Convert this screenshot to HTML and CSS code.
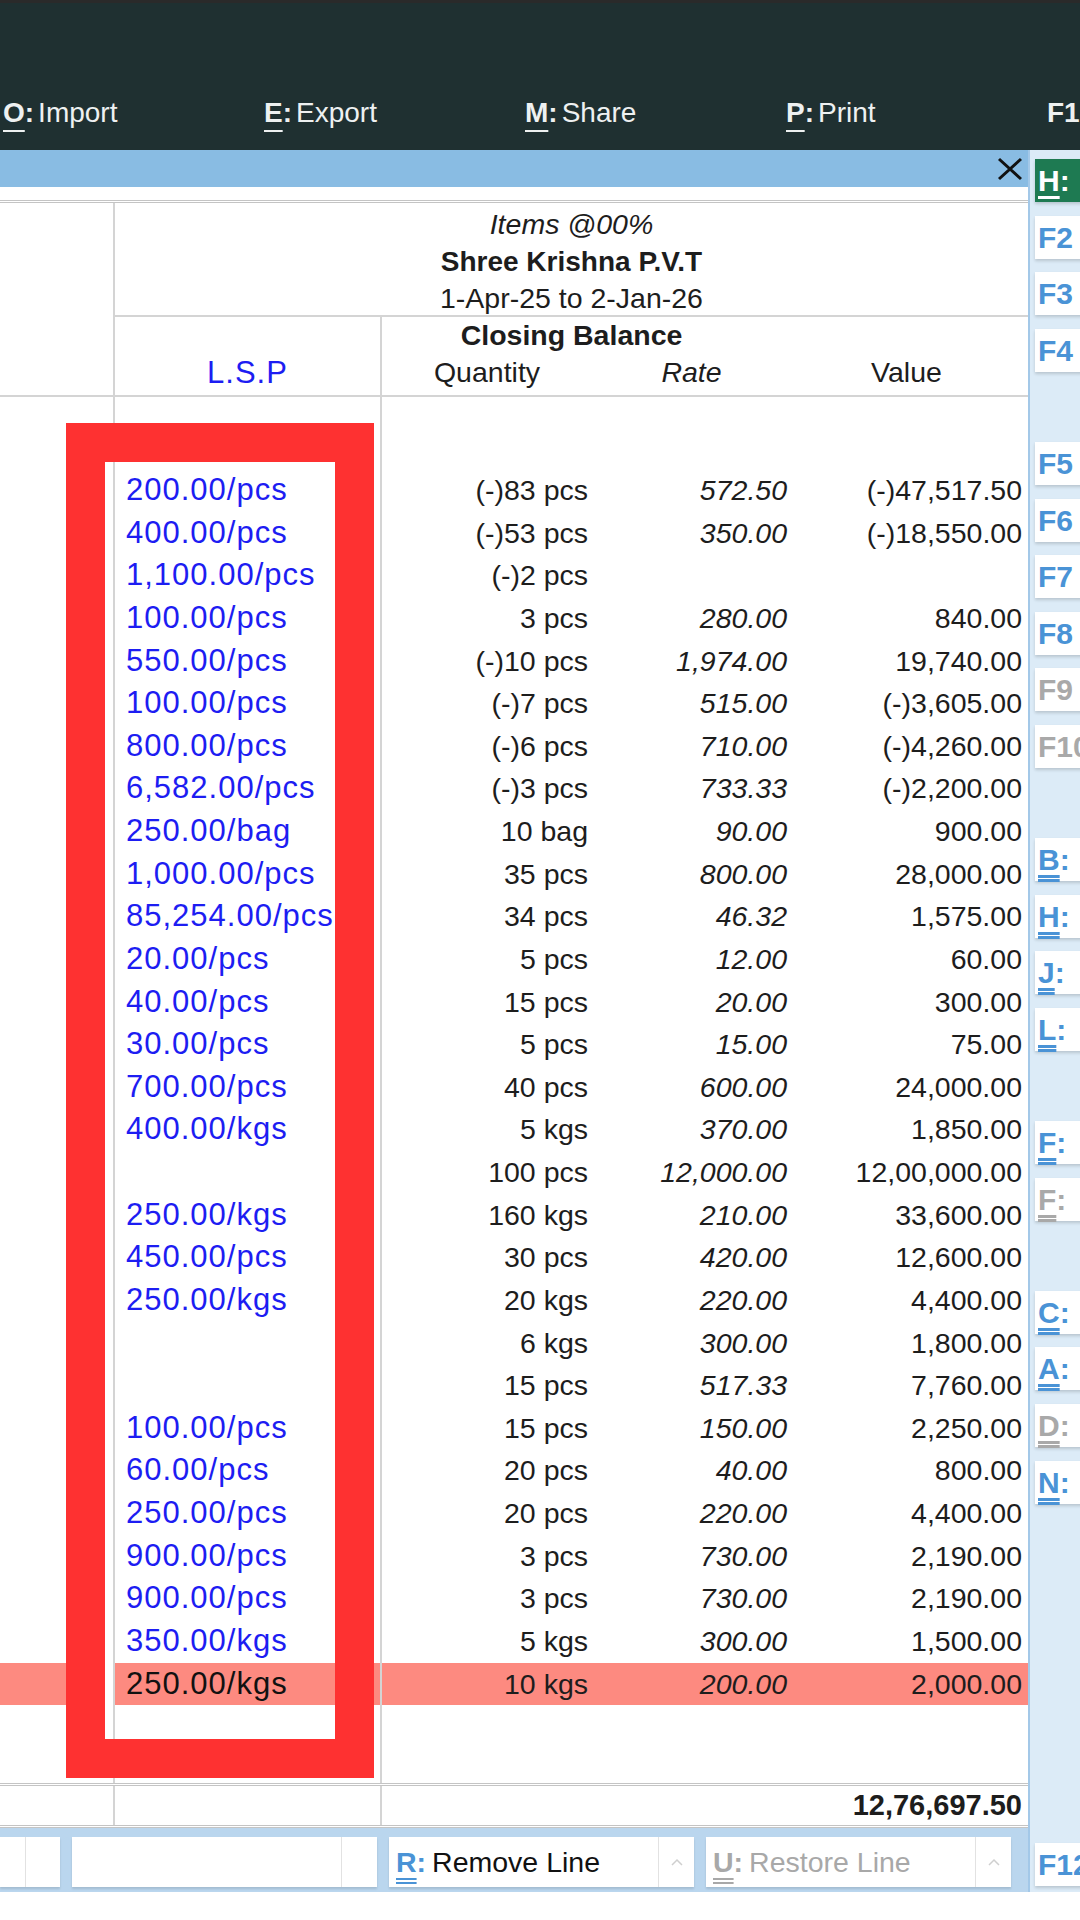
FILE: index.html
```html
<!DOCTYPE html>
<html lang="en">
<head>
    <meta charset="UTF-8">
    <title>Stock Summary - Closing Balance</title>
    <link rel="stylesheet" href="styles.css">
</head>
<body>

    <!-- Top menu -->
    <header class="topbar">
        <div class="menu-item"><b><u>O</u>:</b>Import</div>
        <div class="menu-item"><b><u>E</u>:</b>Export</div>
        <div class="menu-item"><b><u>M</u>:</b>Share</div>
        <div class="menu-item"><b><u>P</u>:</b>Print</div>
        <div class="menu-item"><b>F1</b></div>
    </header>

    <div class="workspace">
        <div class="main">
            <div class="titlebar">
                <svg class="close" width="26" height="24" viewBox="0 0 26 24">
                    <path d="M2 2 L24 22 M24 2 L2 22" stroke="#111" stroke-width="3" fill="none"/>
                </svg>
            </div>

            <div class="report">
                <!-- Report title -->
                <div class="title-block">
                    <div class="cell-name"></div>
                    <div class="title-text">
                        <div class="t-italic">Items @00%</div>
                        <div class="t-bold">Shree Krishna P.V.T</div>
                        <div>1-Apr-25 to 2-Jan-26</div>
                    </div>
                </div>

                <!-- Column headings -->
                <div class="colhead">
                    <div class="ch-name"></div>
                    <div class="ch-lsp"><span class="lsp">L.S.P</span></div>
                    <div class="ch-closing">Closing Balance</div>
                    <div class="ch-qty">Quantity</div>
                    <div class="ch-rate">Rate</div>
                    <div class="ch-value">Value</div>
                </div>

                <div class="row spacer-top"><div class="c-name"></div><div class="c-lsp"></div><div></div><div></div><div></div></div>

                <div class="row"><div class="c-name"></div><div class="c-lsp lsp">200.00/pcs</div><div class="c-qty">(-)83 pcs</div><div class="c-rate">572.50</div><div class="c-value">(-)47,517.50</div></div>
                <div class="row"><div class="c-name"></div><div class="c-lsp lsp">400.00/pcs</div><div class="c-qty">(-)53 pcs</div><div class="c-rate">350.00</div><div class="c-value">(-)18,550.00</div></div>
                <div class="row"><div class="c-name"></div><div class="c-lsp lsp">1,100.00/pcs</div><div class="c-qty">(-)2 pcs</div><div class="c-rate"></div><div class="c-value"></div></div>
                <div class="row"><div class="c-name"></div><div class="c-lsp lsp">100.00/pcs</div><div class="c-qty">3 pcs</div><div class="c-rate">280.00</div><div class="c-value">840.00</div></div>
                <div class="row"><div class="c-name"></div><div class="c-lsp lsp">550.00/pcs</div><div class="c-qty">(-)10 pcs</div><div class="c-rate">1,974.00</div><div class="c-value">19,740.00</div></div>
                <div class="row"><div class="c-name"></div><div class="c-lsp lsp">100.00/pcs</div><div class="c-qty">(-)7 pcs</div><div class="c-rate">515.00</div><div class="c-value">(-)3,605.00</div></div>
                <div class="row"><div class="c-name"></div><div class="c-lsp lsp">800.00/pcs</div><div class="c-qty">(-)6 pcs</div><div class="c-rate">710.00</div><div class="c-value">(-)4,260.00</div></div>
                <div class="row"><div class="c-name"></div><div class="c-lsp lsp">6,582.00/pcs</div><div class="c-qty">(-)3 pcs</div><div class="c-rate">733.33</div><div class="c-value">(-)2,200.00</div></div>
                <div class="row"><div class="c-name"></div><div class="c-lsp lsp">250.00/bag</div><div class="c-qty">10 bag</div><div class="c-rate">90.00</div><div class="c-value">900.00</div></div>
                <div class="row"><div class="c-name"></div><div class="c-lsp lsp">1,000.00/pcs</div><div class="c-qty">35 pcs</div><div class="c-rate">800.00</div><div class="c-value">28,000.00</div></div>
                <div class="row"><div class="c-name"></div><div class="c-lsp lsp">85,254.00/pcs</div><div class="c-qty">34 pcs</div><div class="c-rate">46.32</div><div class="c-value">1,575.00</div></div>
                <div class="row"><div class="c-name"></div><div class="c-lsp lsp">20.00/pcs</div><div class="c-qty">5 pcs</div><div class="c-rate">12.00</div><div class="c-value">60.00</div></div>
                <div class="row"><div class="c-name"></div><div class="c-lsp lsp">40.00/pcs</div><div class="c-qty">15 pcs</div><div class="c-rate">20.00</div><div class="c-value">300.00</div></div>
                <div class="row"><div class="c-name"></div><div class="c-lsp lsp">30.00/pcs</div><div class="c-qty">5 pcs</div><div class="c-rate">15.00</div><div class="c-value">75.00</div></div>
                <div class="row"><div class="c-name"></div><div class="c-lsp lsp">700.00/pcs</div><div class="c-qty">40 pcs</div><div class="c-rate">600.00</div><div class="c-value">24,000.00</div></div>
                <div class="row"><div class="c-name"></div><div class="c-lsp lsp">400.00/kgs</div><div class="c-qty">5 kgs</div><div class="c-rate">370.00</div><div class="c-value">1,850.00</div></div>
                <div class="row"><div class="c-name"></div><div class="c-lsp lsp"></div><div class="c-qty">100 pcs</div><div class="c-rate">12,000.00</div><div class="c-value">12,00,000.00</div></div>
                <div class="row"><div class="c-name"></div><div class="c-lsp lsp">250.00/kgs</div><div class="c-qty">160 kgs</div><div class="c-rate">210.00</div><div class="c-value">33,600.00</div></div>
                <div class="row"><div class="c-name"></div><div class="c-lsp lsp">450.00/pcs</div><div class="c-qty">30 pcs</div><div class="c-rate">420.00</div><div class="c-value">12,600.00</div></div>
                <div class="row"><div class="c-name"></div><div class="c-lsp lsp">250.00/kgs</div><div class="c-qty">20 kgs</div><div class="c-rate">220.00</div><div class="c-value">4,400.00</div></div>
                <div class="row"><div class="c-name"></div><div class="c-lsp lsp"></div><div class="c-qty">6 kgs</div><div class="c-rate">300.00</div><div class="c-value">1,800.00</div></div>
                <div class="row"><div class="c-name"></div><div class="c-lsp lsp"></div><div class="c-qty">15 pcs</div><div class="c-rate">517.33</div><div class="c-value">7,760.00</div></div>
                <div class="row"><div class="c-name"></div><div class="c-lsp lsp">100.00/pcs</div><div class="c-qty">15 pcs</div><div class="c-rate">150.00</div><div class="c-value">2,250.00</div></div>
                <div class="row"><div class="c-name"></div><div class="c-lsp lsp">60.00/pcs</div><div class="c-qty">20 pcs</div><div class="c-rate">40.00</div><div class="c-value">800.00</div></div>
                <div class="row"><div class="c-name"></div><div class="c-lsp lsp">250.00/pcs</div><div class="c-qty">20 pcs</div><div class="c-rate">220.00</div><div class="c-value">4,400.00</div></div>
                <div class="row"><div class="c-name"></div><div class="c-lsp lsp">900.00/pcs</div><div class="c-qty">3 pcs</div><div class="c-rate">730.00</div><div class="c-value">2,190.00</div></div>
                <div class="row"><div class="c-name"></div><div class="c-lsp lsp">900.00/pcs</div><div class="c-qty">3 pcs</div><div class="c-rate">730.00</div><div class="c-value">2,190.00</div></div>
                <div class="row"><div class="c-name"></div><div class="c-lsp lsp">350.00/kgs</div><div class="c-qty">5 kgs</div><div class="c-rate">300.00</div><div class="c-value">1,500.00</div></div>
                <div class="row selected"><div class="c-name"></div><div class="c-lsp lsp">250.00/kgs</div><div class="c-qty">10 kgs</div><div class="c-rate">200.00</div><div class="c-value">2,000.00</div></div>

                <div class="row spacer-bottom"><div class="c-name"></div><div class="c-lsp"></div><div></div><div></div><div></div></div>

                <!-- Grand total -->
                <div class="row total"><div class="c-name"></div><div class="c-lsp"></div><div></div><div></div><div class="c-value">12,76,697.50</div></div>
            </div>

            <!-- Bottom button bar -->
            <div class="actionbar">
                <div class="abtn-group">
                    <div class="abtn" style="width:26px"></div>
                    <div class="abtn" style="width:34px"></div>
                </div>
                <div class="abtn-group">
                    <div class="abtn wide"></div>
                    <div class="abtn arrow"></div>
                </div>
                <div class="abtn-group">
                    <div class="abtn wide"><span class="akey"><u>R</u>:</span>Remove Line</div>
                    <div class="abtn arrow"><svg width="12" height="8" viewBox="0 0 12 8"><polyline points="1,7 6,2 11,7" fill="none" stroke="#cfcfcf" stroke-width="1.5"/></svg></div>
                </div>
                <div class="abtn-group">
                    <div class="abtn wide disabled"><span class="akey"><u>U</u>:</span>Restore Line</div>
                    <div class="abtn arrow"><svg width="12" height="8" viewBox="0 0 12 8"><polyline points="1,7 6,2 11,7" fill="none" stroke="#cfcfcf" stroke-width="1.5"/></svg></div>
                </div>
            </div>
        </div>

        <!-- Right side buttons (only the keys fit in view) -->
        <aside class="sidebar">
            <div class="sk active"><u class="single">H</u>:</div>
            <div class="sk">F2</div>
            <div class="sk">F3</div>
            <div class="sk">F4</div>
            <div class="sk-blank"></div>
            <div class="sk">F5</div>
            <div class="sk">F6</div>
            <div class="sk">F7</div>
            <div class="sk">F8</div>
            <div class="sk off">F9</div>
            <div class="sk off">F10</div>
            <div class="sk-blank"></div>
            <div class="sk"><u>B</u>:</div>
            <div class="sk"><u>H</u>:</div>
            <div class="sk"><u>J</u>:</div>
            <div class="sk"><u>L</u>:</div>
            <div class="sk-blank"></div>
            <div class="sk"><u>F</u>:</div>
            <div class="sk off"><u>F</u>:</div>
            <div class="sk-blank"></div>
            <div class="sk"><u>C</u>:</div>
            <div class="sk"><u>A</u>:</div>
            <div class="sk off"><u>D</u>:</div>
            <div class="sk"><u>N</u>:</div>
            <div class="sk bottom">F12</div>
        </aside>
    </div>

    <!-- Red highlight drawn over the L.S.P column -->
    <div class="annotation"></div>

</body>
</html>
```

FILE: styles.css
```css
/* General */
* {
    margin: 0;
    padding: 0;
    box-sizing: border-box;
}
html, body {
    width: 1080px;
    height: 1920px;
    overflow: hidden;
    background: #fff;
    font-family: "Liberation Sans", Arial, sans-serif;
    color: #1d1d1d;
}
body {
    position: relative;
}

/* Top menu */
.topbar {
    height: 150px;
    background: #1f3031;
    border-top: 3px solid #2a2a2a;
    display: flex;
    padding: 90px 0 0 3px;
}
.menu-item {
    flex: none;
    width: 261px;
    color: #eef1f1;
    font-size: 28px;
    line-height: 40px;
    white-space: nowrap;
}
.menu-item:last-child {
    width: 33px;
}
.menu-item b {
    margin-right: 4px;
}
.menu-item u {
    text-decoration-thickness: 2px;
    text-underline-offset: 8px;
}

/* Layout */
.workspace {
    display: flex;
    height: 1742px;
}
.main {
    width: 1028px;
    flex: none;
    display: flex;
    flex-direction: column;
}
.titlebar {
    height: 37px;
    background: #89bce3;
    display: flex;
    justify-content: flex-end;
    align-items: center;
    padding-right: 5px;
}

/* Report */
.report {
    margin-top: 13px;
    border-top: 3px double #c4c4c4;
    flex: 1;
    display: flex;
    flex-direction: column;
    font-size: 28.5px;
}
.title-block {
    display: grid;
    grid-template-columns: 115px 1fr;
}
.cell-name,
.ch-name,
.c-name {
    border-right: 2px solid #d4d4d4;
}
.title-text {
    height: 114px;
    padding-top: 3px;
    border-bottom: 2px solid #d4d4d4;
    text-align: center;
    line-height: 37px;
}
.t-italic {
    font-style: italic;
}
.t-bold {
    font-weight: bold;
    font-size: 28px;
}

.colhead {
    display: grid;
    grid-template-columns: 115px 267px 210px 199px 1fr;
    grid-template-rows: 36px 42px;
    border-bottom: 2px solid #d4d4d4;
}
.ch-name {
    grid-column: 1;
    grid-row: 1 / 3;
}
.ch-lsp {
    grid-column: 2;
    grid-row: 1 / 3;
    border-right: 2px solid #d4d4d4;
    display: flex;
    align-items: flex-end;
    justify-content: center;
    padding-bottom: 4px;
    line-height: 36px;
}
.ch-closing {
    grid-column: 2 / 6;
    grid-row: 1;
    text-align: center;
    font-weight: bold;
    line-height: 36px;
}
.ch-qty,
.ch-rate,
.ch-value {
    grid-row: 2;
    text-align: center;
    line-height: 38px;
}
.ch-qty { grid-column: 3; }
.ch-rate { grid-column: 4; font-style: italic; }
.ch-value { grid-column: 5; padding-right: 6px; }

.lsp {
    color: #1d1df2;
    font-size: 31px;
    letter-spacing: 1px;
}

/* Rows */
.row {
    display: grid;
    grid-template-columns: 115px 267px 210px 199px 1fr;
    height: 42.63px;
    line-height: 42.63px;
    white-space: nowrap;
}
.c-lsp {
    border-right: 2px solid #d4d4d4;
    padding-left: 11px;
}
.c-qty {
    text-align: right;
    padding-right: 4px;
}
.c-rate {
    text-align: right;
    padding-right: 4px;
    font-style: italic;
}
.c-value {
    text-align: right;
    padding-right: 6px;
}
.spacer-top {
    height: 72px;
}
.spacer-bottom {
    height: auto;
    flex: 1;
}
.row.selected {
    background: #fd8a80;
}
.row.selected .c-name {
    background: linear-gradient(to right, #fd8a80 104px, #fff 104px);
}
.row.selected .lsp {
    color: #111;
}
.row.total {
    height: 45px;
    line-height: 39px;
    border-top: 3px double #c4c4c4;
    border-bottom: 3px double #c4c4c4;
}
.row.total .c-value {
    font-weight: bold;
    font-size: 29px;
}

/* Bottom button bar */
.actionbar {
    height: 64px;
    background: #bad6ee;
    display: flex;
    gap: 12px;
    padding-top: 9px;
}
.abtn-group {
    display: flex;
    height: 50px;
    background: #fff;
    box-shadow: 0 2px 2px rgba(0, 0, 0, 0.12);
}
.abtn {
    height: 100%;
    border-right: 1px solid #e2e2e2;
    font-size: 28.5px;
    line-height: 50px;
    white-space: nowrap;
    color: #111;
}
.abtn:last-child {
    border-right: none;
}
.abtn.wide {
    width: 270px;
    padding-left: 7px;
}
.abtn.arrow {
    width: 35px;
    display: flex;
    align-items: center;
    justify-content: center;
}
.akey {
    color: #4a93d6;
    font-weight: bold;
    margin-right: 6px;
}
.akey u {
    text-decoration-style: double;
    text-underline-offset: 6px;
}
.abtn.disabled,
.abtn.disabled .akey {
    color: #a8a8a8;
}

/* Right side buttons */
.sidebar {
    width: 52px;
    flex: none;
    border-left: 2px solid #a3c8e8;
    background: #dcebf7;
    padding: 9px 0 6px 5px;
    display: flex;
    flex-direction: column;
    overflow: hidden;
}
.sk,
.sk-blank {
    flex: none;
    width: 60px;
    height: 43px;
    margin-bottom: 13.6px;
}
.sk {
    background: #fff;
    box-shadow: 0 2px 3px rgba(0, 0, 0, 0.16);
    padding-left: 3px;
    color: #4a93d6;
    font-weight: bold;
    font-size: 30px;
    line-height: 43px;
    white-space: nowrap;
}
.sk u {
    text-decoration-style: double;
    text-underline-offset: 5px;
}
.sk u.single {
    text-decoration-style: solid;
}
.sk.active {
    background: #1e7a52;
    color: #fff;
}
.sk.off {
    color: #a9a9a9;
}
.sk.bottom {
    margin-top: auto;
    margin-bottom: 0;
}

/* Red marker drawn on top of the report */
.annotation {
    position: absolute;
    left: 66px;
    top: 423px;
    width: 308px;
    height: 1355px;
    border: 39px solid #fe3131;
}
```
